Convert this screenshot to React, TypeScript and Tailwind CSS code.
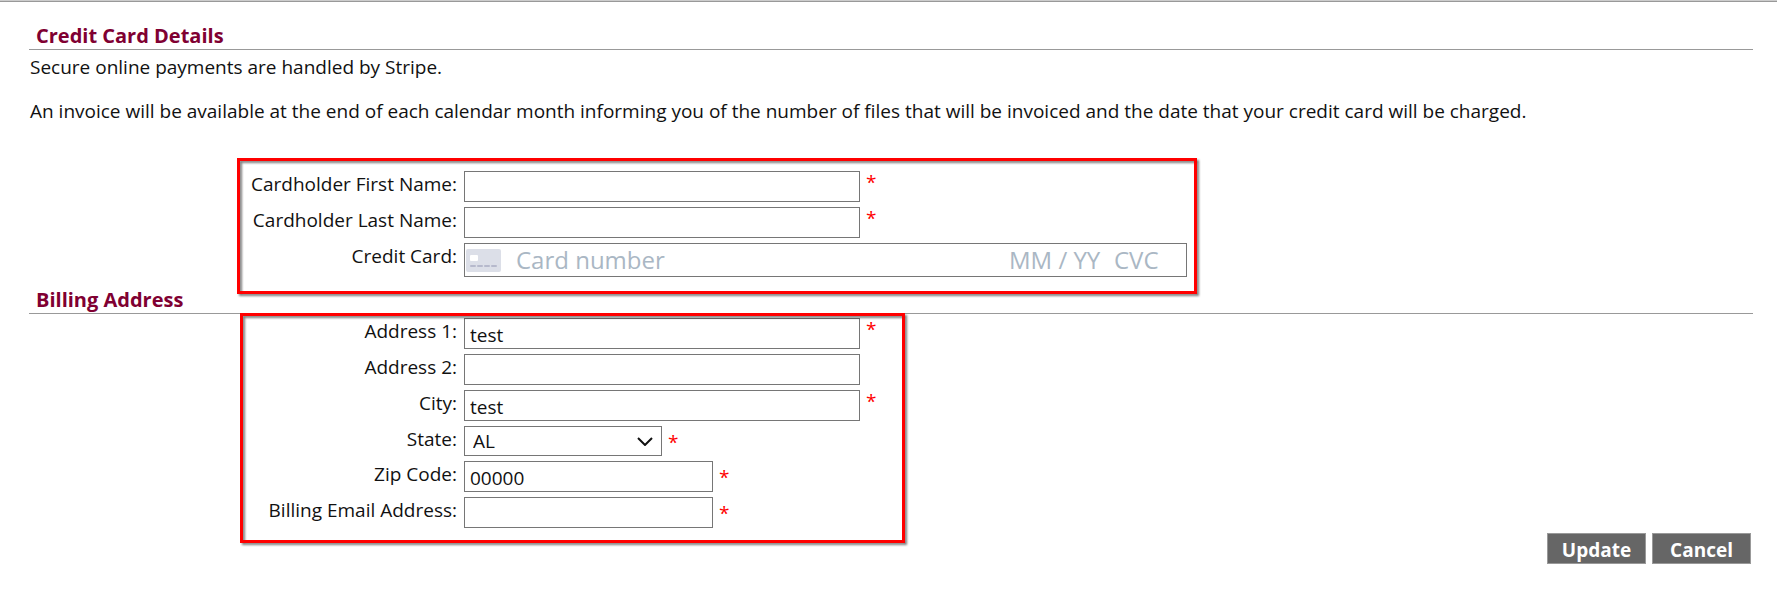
import type { ReactNode } from 'react';

interface RowProps {
  id: string;
  label: string;
  required?: boolean;
  low?: boolean;
  children: ReactNode;
}

const inputClass = 'h-[31px] border border-[#767676] bg-white px-[5px] pt-[2px] text-[19px] leading-6 outline-none';
const buttonClass = 'h-[31px] w-[99px] border border-[#999999] bg-[#666666] pt-[2px] text-[19px] leading-6 font-bold text-white';

function Row({ id, label, required, low, children }: RowProps) {
  return (
    <div className="flex items-start">
      <label htmlFor={id} className="w-[428px] shrink-0 text-right leading-[26px]">{label}</label>
      <div className="ml-[7px] flex">
        {children}
        {required && (
          <span className={low ? 'ml-[6px] pt-1 leading-6 text-[#ff0000]' : 'ml-[6px] leading-[22px] text-[#ff0000]'}>*</span>
        )}
      </div>
    </div>
  );
}

function Heading({ children }: { children: ReactNode }) {
  return (
    <h2 className="border-b border-[#999999] pl-[7px] text-[20px] leading-[26px] font-bold text-[#800032]">{children}</h2>
  );
}

// Red frame drawn over a group of fields
function Highlight({ className }: { className: string }) {
  return (
    <div className={`pointer-events-none absolute border-3 border-[#ff0000] drop-shadow-[2px_2px_1px_rgba(0,0,0,0.5)] ${className}`} />
  );
}

function CardIcon() {
  return (
    <svg viewBox="0 0 35 23" className="h-[23px] w-[35px] shrink-0">
      <rect width="35" height="23" rx="2" fill="#dcdfe8" />
      <rect x="4" y="6" width="8" height="6" rx="1" fill="#ffffff" />
      <path d="M5 17H9M12 17H16M19 17H23M26 17H30" stroke="#b6b9cc" strokeWidth="2" strokeLinecap="round" />
    </svg>
  );
}

export default function App() {
  return (
    <form
      className="border-t border-[#cccccc] bg-white font-['Open_Sans',sans-serif] text-[19px] text-[#111111]"
      onSubmit={e => e.preventDefault()}
    >
      <div className="border-t border-[#999999] pt-[21px] pr-6 pl-[29px]">
        <Heading>Credit Card Details</Heading>
        <div className="space-y-5 pt-[5px] pl-px leading-6">
          <p>Secure online payments are handled by Stripe.</p>
          <p>
            An invoice will be available at the end of each calendar month informing you of the number of files that
            will be invoiced and the date that your credit card will be charged.
          </p>
        </div>

        <div className="relative mt-12 space-y-[5px]">
          <Row id="firstName" label="Cardholder First Name:" required>
            <input id="firstName" type="text" className={`${inputClass} w-[396px]`} />
          </Row>
          <Row id="lastName" label="Cardholder Last Name:" required>
            <input id="lastName" type="text" className={`${inputClass} w-[396px]`} />
          </Row>
          <Row id="cardNumber" label="Credit Card:">
            <div className="flex h-[34px] w-[723px] items-center border border-[#767676] pr-6 pl-px text-[24px]">
              <CardIcon />
              <input
                id="cardNumber"
                type="text"
                placeholder="Card number"
                className="ml-[15px] min-w-0 flex-1 leading-8 outline-none placeholder:text-[#aab7c4]"
              />
              <input
                type="text"
                aria-label="Expiry date"
                placeholder="MM / YY"
                className="w-[105px] leading-8 outline-none placeholder:text-[#aab7c4]"
              />
              <input
                type="text"
                aria-label="CVC"
                placeholder="CVC"
                className="w-12 leading-8 outline-none placeholder:text-[#aab7c4]"
              />
            </div>
          </Row>
          <Highlight className="-top-[13px] left-[208px] h-[136px] w-[960px]" />
        </div>

        <div className="mt-[10px]">
          <Heading>Billing Address</Heading>
        </div>

        <div className="relative space-y-[5px] pt-1">
          <Row id="address1" label="Address 1:" required>
            <input id="address1" type="text" defaultValue="test" className={`${inputClass} w-[396px]`} />
          </Row>
          <Row id="address2" label="Address 2:">
            <input id="address2" type="text" className={`${inputClass} w-[396px]`} />
          </Row>
          <Row id="city" label="City:" required>
            <input id="city" type="text" defaultValue="test" className={`${inputClass} w-[396px]`} />
          </Row>
          <Row id="state" label="State:" required low>
            <div className="relative">
              <select
                id="state"
                defaultValue="AL"
                className="h-[30px] w-[198px] appearance-none border border-[#767676] bg-white px-2 text-[19px] leading-7 outline-none"
              >
                <option>AL</option>
                <option>AK</option>
                <option>AZ</option>
                <option>AR</option>
              </select>
              <svg viewBox="0 0 16 9" className="pointer-events-none absolute top-[11px] right-[9px] h-[9px] w-4">
                <path d="M1 1L8 8L15 1" fill="none" stroke="#111111" strokeWidth="2" />
              </svg>
            </div>
          </Row>
          <Row id="zip" label="Zip Code:" required low>
            <input id="zip" type="text" defaultValue="00000" className={`${inputClass} w-[249px]`} />
          </Row>
          <Row id="email" label="Billing Email Address:" required low>
            <input id="email" type="email" className={`${inputClass} w-[249px]`} />
          </Row>
          <Highlight className="-top-px left-[211px] h-[230px] w-[665px]" />
        </div>

        <div className="mt-[5px] flex justify-end gap-[6px] pr-[2px]">
          <button type="submit" className={buttonClass}>Update</button>
          <button type="button" className={buttonClass}>Cancel</button>
        </div>
      </div>
    </form>
  );
}
